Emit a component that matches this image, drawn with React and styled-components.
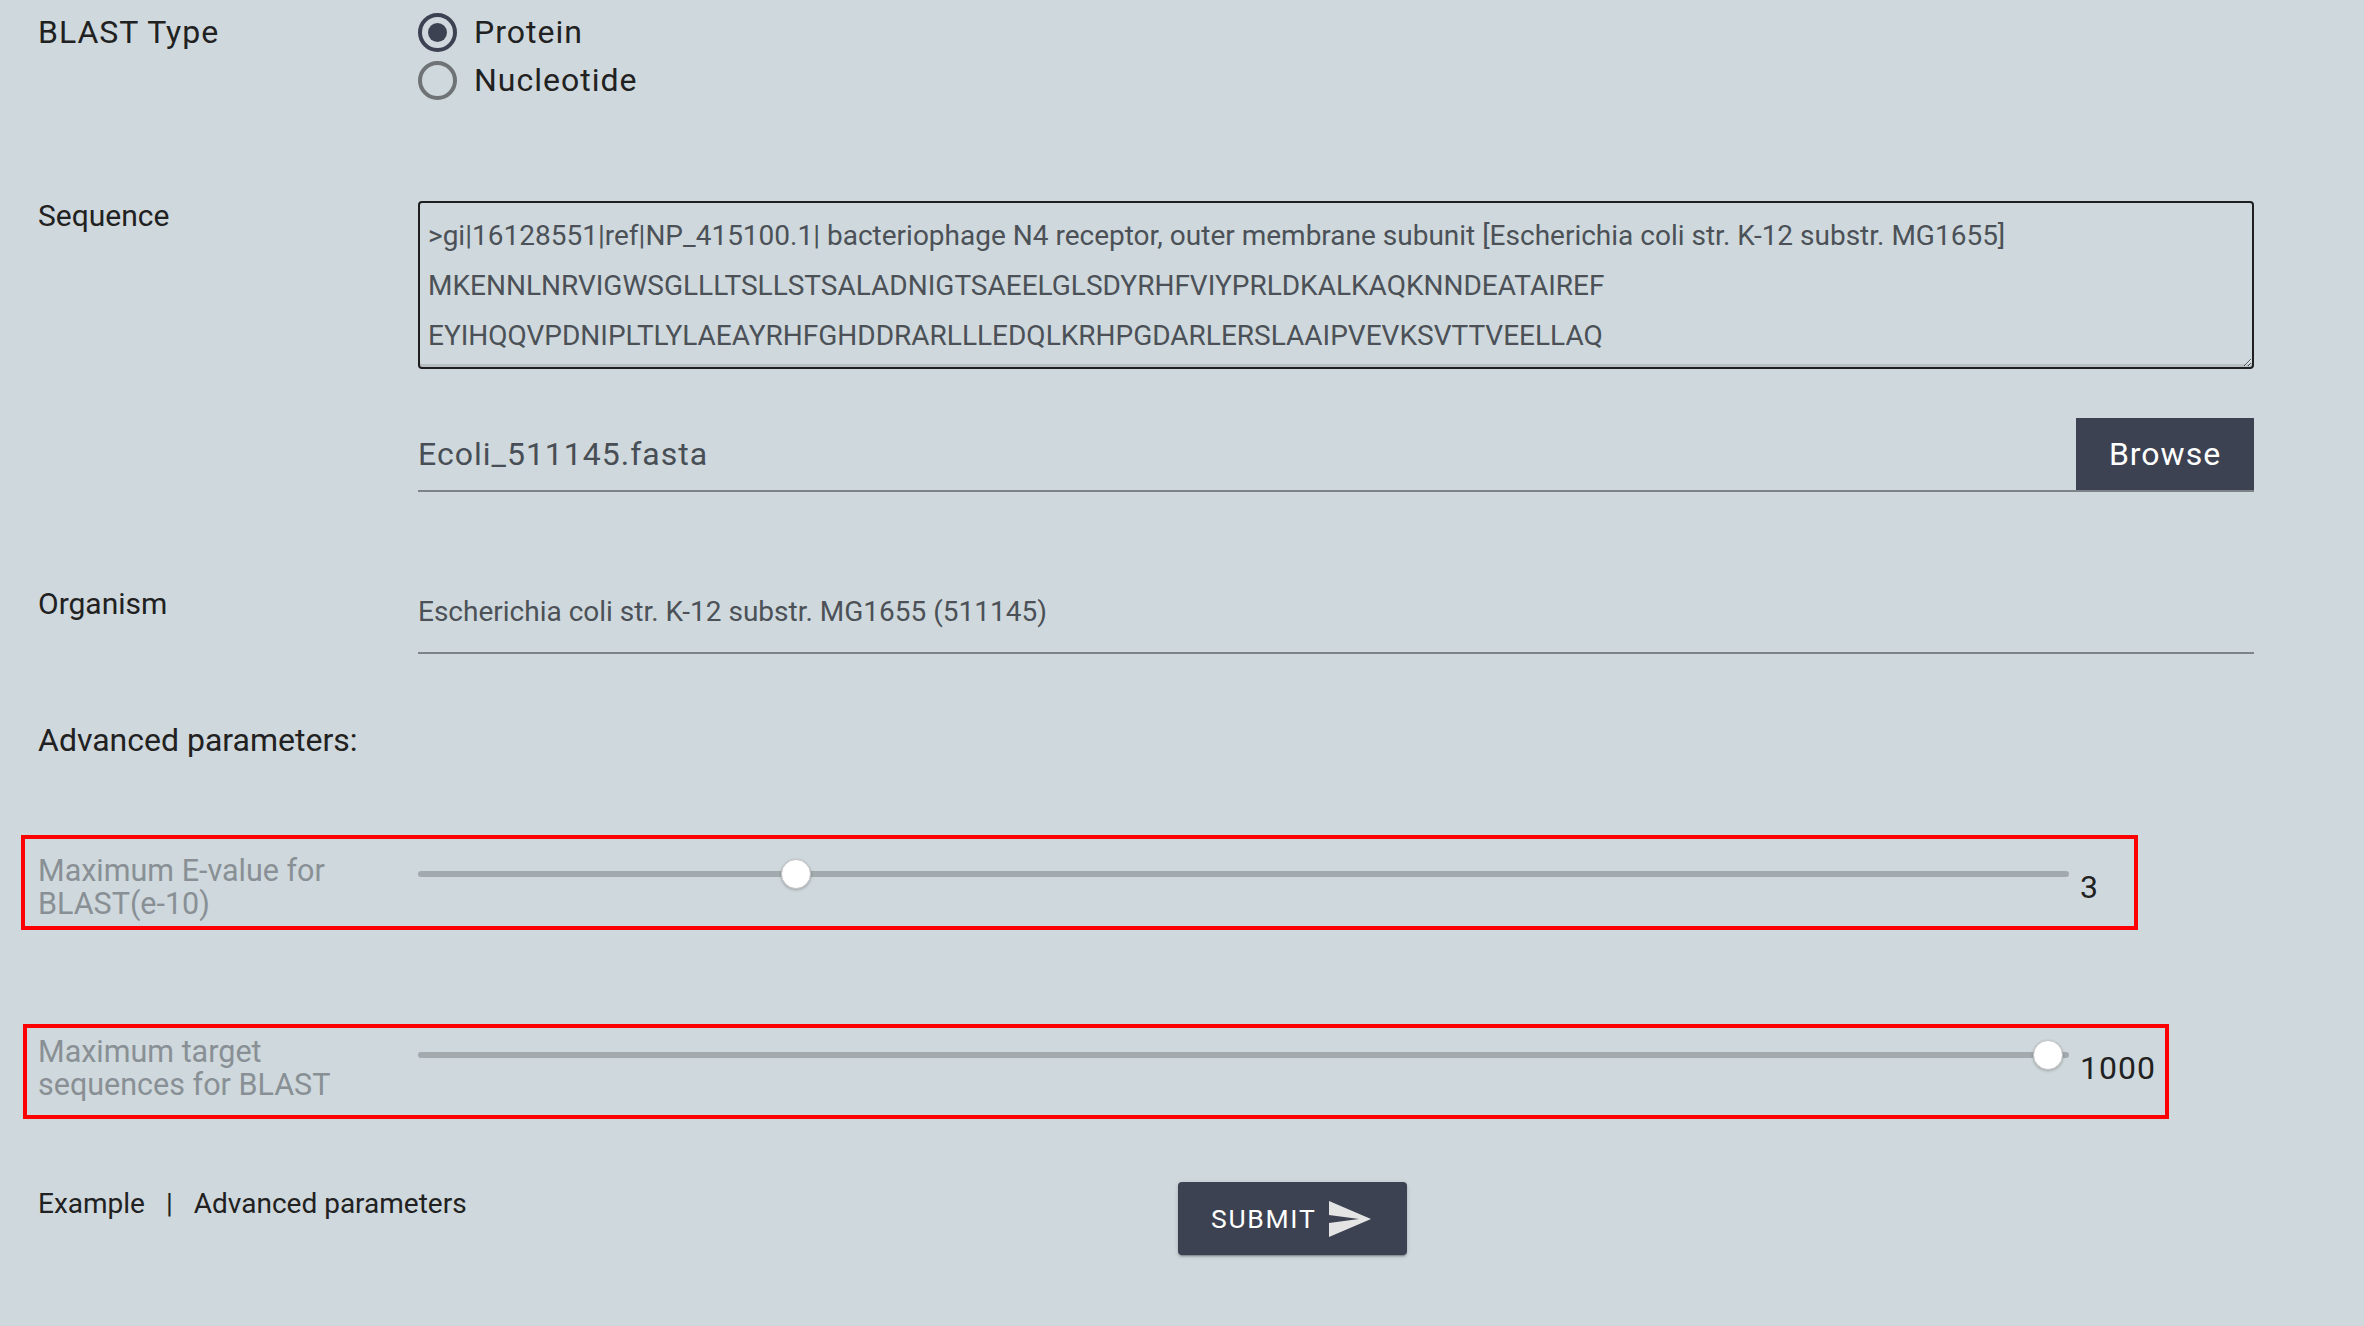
import React from 'react';
import styled, { createGlobalStyle } from 'styled-components';

const GlobalStyle = createGlobalStyle`
  body {
    margin: 0;
    background: #cfd8dc;
    font-family: Roboto, "Noto Sans", sans-serif;
  }
`;

const sequence = [
  '>gi|16128551|ref|NP_415100.1| bacteriophage N4 receptor, outer membrane subunit [Escherichia coli str. K-12 substr. MG1655]',
  'MKENNLNRVIGWSGLLLTSLLSTSALADNIGTSAEELGLSDYRHFVIYPRLDKALKAQKNNDEATAIREF',
  'EYIHQQVPDNIPLTLYLAEAYRHFGHDDRARLLLEDQLKRHPGDARLERSLAAIPVEVKSVTTVEELLAQ',
].join('\n');

function Radio({ checked, label }) {
  return (
    <RadioOption>
      <RadioCircle checked={checked}>{checked && <RadioDot />}</RadioCircle>
      {label}
    </RadioOption>
  );
}

function SliderField({ label, value, fraction, width, shift, left }) {
  return (
    <SliderBox width={width} shift={shift} left={left}>
      <SliderLabel>{label}</SliderLabel>
      <Track>
        <Rail />
        <Thumb style={{ left: `${fraction * 100}%` }} />
      </Track>
      <SliderValue>{value}</SliderValue>
    </SliderBox>
  );
}

export default function App() {
  return (
    <Page>
      <GlobalStyle />
      <Row>
        <Label size={32} lh={48} spaced>BLAST Type</Label>
        <RadioGroup>
          <Radio checked label="Protein" />
          <Radio label="Nucleotide" />
        </RadioGroup>
      </Row>

      <Row mt={97}>
        <Label size={30} lh={30}>Sequence</Label>
        <SequenceArea defaultValue={sequence} spellCheck={false} />
      </Row>

      <Row mt={49}>
        <Label />
        <FileField>
          <FileName>Ecoli_511145.fasta</FileName>
          <BrowseButton>Browse</BrowseButton>
        </FileField>
      </Row>

      <Row mt={100}>
        <Label size={30} lh={24}>Organism</Label>
        <OrganismField>Escherichia coli str. K-12 substr. MG1655 (511145)</OrganismField>
      </Row>

      <Heading>Advanced parameters:</Heading>

      <SliderField
        label={<>Maximum E-value for<br />BLAST(e-10)</>}
        value="3"
        fraction={0.229}
        width={2117}
        shift={4}
        left={-17}
      />
      <Spacer h={94} />
      <SliderField
        label={<>Maximum target<br />sequences for BLAST</>}
        value="1000"
        fraction={0.987}
        width={2146}
        shift={-4}
        left={-15}
      />

      <Footer>
        <Links>
          <TextLink>Example</TextLink>
          <Separator>|</Separator>
          <TextLink>Advanced parameters</TextLink>
        </Links>
        <SubmitButton>
          SUBMIT
          <svg width="48" height="48" viewBox="0 0 24 24">
            <path d="M2.01 21L23 12 2.01 3 2 10l15 2-15 2z" fill="#e4e4e4" />
          </svg>
        </SubmitButton>
      </Footer>
    </Page>
  );
}

const Page = styled.div`
  display: flex;
  flex-direction: column;
  width: 2364px;
  min-height: 1326px;
  box-sizing: border-box;
  padding: 8px 110px 0 38px;
  background: #cfd8dc;
  color: #212121;
`;
const Row = styled.div`
  display: flex;
  align-items: flex-start;
  margin-top: ${p => p.mt || 0}px;
`;
const Label = styled.div`
  width: 380px;
  flex-shrink: 0;
  font-size: ${p => p.size || 30}px;
  line-height: ${p => p.lh || 30}px;
  letter-spacing: ${p => (p.spaced ? '0.03125em' : '0')};
  color: #212121;
`;
const RadioGroup = styled.div`
  display: flex;
  flex-direction: column;
`;
const RadioOption = styled.label`
  display: flex;
  align-items: center;
  gap: 17px;
  height: 48px;
  font-size: 32px;
  letter-spacing: 0.03125em;
  color: #212121;
`;
const RadioCircle = styled.span`
  display: flex;
  align-items: center;
  justify-content: center;
  width: 39px;
  height: 39px;
  box-sizing: border-box;
  border-radius: 50%;
  border: 4px solid ${p => (p.checked ? '#3d4252' : '#6f7375')};
`;
const RadioDot = styled.span`
  width: 19px;
  height: 19px;
  border-radius: 50%;
  background: #3d4252;
`;
const SequenceArea = styled.textarea`
  flex: 1;
  height: 168px;
  box-sizing: border-box;
  padding: 8px 8px 6px;
  border: 2px solid #1f1f1f;
  border-radius: 4px;
  box-shadow: inset 0 -3px 0 #b7bfc3;
  background: transparent;
  font-family: Roboto, "Noto Sans", sans-serif;
  font-size: 28px;
  line-height: 50px;
  color: #4b5157;
  white-space: pre;
  overflow: hidden;
  resize: vertical;
  outline: none;
`;
const FileField = styled.div`
  flex: 1;
  display: flex;
  height: 74px;
  box-sizing: border-box;
  border-bottom: 2px solid #7d8386;
`;
const FileName = styled.div`
  flex: 1;
  display: flex;
  align-items: center;
  font-size: 32px;
  letter-spacing: 0.03125em;
  color: #484e55;
`;
const BrowseButton = styled.button`
  width: 178px;
  border: none;
  border-radius: 0;
  background: #3d4252;
  color: #fff;
  font-family: Roboto, "Noto Sans", sans-serif;
  font-size: 32px;
  letter-spacing: 1px;
`;
const OrganismField = styled.div`
  flex: 1;
  padding-bottom: 20px;
  border-bottom: 2px solid #7d8386;
  font-size: 28px;
  line-height: 40px;
  color: #4b5157;
`;
const Heading = styled.div`
  margin-top: 66px;
  font-size: 32px;
  line-height: 40px;
  color: #212121;
`;
const SliderBox = styled.div`
  display: flex;
  align-items: center;
  width: ${p => p.width}px;
  height: 95px;
  box-sizing: border-box;
  margin-top: 75px;
  margin-left: ${p => p.left}px;
  padding-left: ${p => -p.left - 4}px;
  padding-top: ${p => Math.max(p.shift, 0) * 2}px;
  padding-bottom: ${p => Math.max(-p.shift, 0) * 2}px;
  border: 4px solid #ff0000;
`;
const Spacer = styled.div`
  height: ${p => p.h}px;
  flex-shrink: 0;
  & + ${SliderBox} { margin-top: 0; }
`;
const SliderLabel = styled.div`
  width: 380px;
  flex-shrink: 0;
  font-size: 30.5px;
  line-height: 33px;
  color: #899095;
`;
const Track = styled.div`
  position: relative;
  display: flex;
  align-items: center;
  width: 1651px;
  height: 30px;
  margin-bottom: 26px;
`;
const Rail = styled.div`
  width: 100%;
  height: 6px;
  border-radius: 3px;
  background: #a2aaad;
`;
const Thumb = styled.div`
  position: absolute;
  top: 50%;
  width: 30px;
  height: 30px;
  border-radius: 50%;
  background: #fff;
  border: 1px solid #c4c4c4;
  box-sizing: border-box;
  box-shadow: 0 1px 3px rgba(0, 0, 0, 0.25);
  transform: translate(-50%, -50%);
`;
const SliderValue = styled.div`
  margin-left: 11px;
  font-size: 32px;
  letter-spacing: 0.03125em;
  color: #212121;
`;
const Footer = styled.div`
  display: flex;
  align-items: flex-start;
  margin-top: 63px;
`;
const Links = styled.div`
  display: flex;
  width: 1140px;
  flex-shrink: 0;
  font-size: 28px;
  line-height: 44px;
  color: #212121;
`;
const TextLink = styled.span`
  cursor: pointer;
`;
const Separator = styled.span`
  margin: 0 21px;
`;
const SubmitButton = styled.button`
  display: flex;
  align-items: center;
  gap: 9px;
  width: 229px;
  height: 73px;
  padding: 0 0 0 33px;
  border: none;
  border-radius: 4px;
  background: #3d4252;
  color: #fff;
  font-family: Roboto, "Noto Sans", sans-serif;
  font-size: 26.5px;
  letter-spacing: 1.7px;
  box-shadow: 0 3px 1px -2px rgba(0, 0, 0, 0.2), 0 2px 2px 0 rgba(0, 0, 0, 0.14),
    0 1px 5px 0 rgba(0, 0, 0, 0.12);
`;
